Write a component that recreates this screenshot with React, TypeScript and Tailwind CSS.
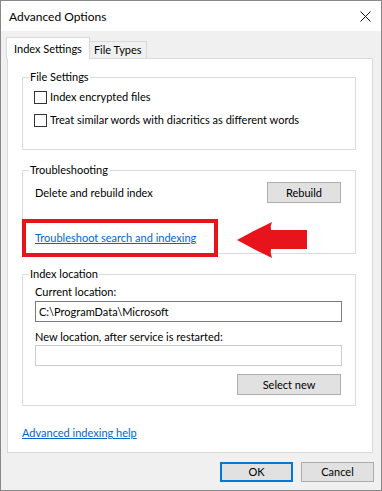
import React from "react";

function Checkbox({ label }: { label: string }) {
  return (
    <div className="flex items-center h-[16px]">
      <span className="w-[13px] h-[13px] border border-[#333333] bg-white mr-[3px]" />
      <span>{label}</span>
    </div>
  );
}

function Group({ title, children, className }: { title: string; children: React.ReactNode; className?: string }) {
  return (
    <fieldset className={"border border-[#dcdcdc] ml-[14px] mr-[16px] " + (className ?? "")}>
      <legend className="ml-[6px] px-[1px] leading-[16px]">{title}</legend>
      {children}
    </fieldset>
  );
}

function WinButton({ label, primary, className }: { label: string; primary?: boolean; className?: string }) {
  return (
    <div
      className={
        "flex items-center justify-center bg-[#e1e1e1] " +
        (primary ? "border-2 border-[#0078d7] " : "border border-[#adadad] ") +
        (className ?? "")
      }
    >
      {label}
    </div>
  );
}

export default function App() {
  return (
    <div className="w-[382px] h-[491px] flex flex-col bg-[#f0f0f0] border border-[#888888] text-[11px] leading-[16px] text-black font-['Lato',sans-serif] overflow-hidden">
      {/* title bar */}
      <div className="h-[30px] shrink-0 bg-white flex items-center justify-between pl-[8px] pr-[10px]">
        <span className="text-[12px] pt-[1px]">Advanced Options</span>
        <svg width="11" height="11" viewBox="0 0 11 11">
          <path d="M0.5 0.5 L10.5 10.5 M10.5 0.5 L0.5 10.5" stroke="#111" strokeWidth="1" fill="none" />
        </svg>
      </div>

      {/* tabs */}
      <div className="flex items-end pl-[5px] pt-[6px] h-[27px] shrink-0">
        <div className="px-[7px] bg-white border border-b-0 border-[#d9d9d9] flex items-center relative z-10 mb-[-1px] h-[22px]">
          Index Settings
        </div>
        <div className="h-[17px] px-[4px] bg-[#f0f0f0] border border-l-0 border-b-0 border-[#d9d9d9] flex items-center">
          File Types
        </div>
      </div>

      {/* tab panel */}
      <div className="relative mx-[6px] w-[366px] h-[395px] bg-white border border-[#d9d9d9] pt-[10px]">
        <Group title="File Settings" className="pb-[21px]">
          <div className="flex flex-col gap-[7px] pl-[11px] pt-[4px]">
            <Checkbox label="Index encrypted files" />
            <Checkbox label="Treat similar words with diacritics as different words" />
          </div>
        </Group>

        <Group title="Troubleshooting" className="mt-[12px] pb-[7px]">
          <div className="flex items-center justify-between pl-[12px] pr-[14px] pt-[4px]">
            <span>Delete and rebuild index</span>
            <WinButton label="Rebuild" className="w-[74px] h-[21px]" />
          </div>
          <div className="pl-[12px] mt-[27px]">
            <span className="text-[#0066cc] underline">Troubleshoot search and indexing</span>
          </div>
        </Group>

        <Group title="Index location" className="mt-[12px] pb-[10px]">
          <div className="flex flex-col pl-[12px] pr-[13px] pt-[2px]">
            <span>Current location:</span>
            <div className="mt-[1px] h-[21px] border border-[#7a7a7a] flex items-center pl-[3px]">
              C:\ProgramData\Microsoft
            </div>
            <span className="mt-[7px]">New location, after service is restarted:</span>
            <div className="h-[21px] border border-[#cccccc]" />
            <div className="flex justify-end mt-[8px]">
              <WinButton label="Select new" className="w-[104px] h-[21px] mr-[1px]" />
            </div>
          </div>
        </Group>

        <div className="pl-[14px] mt-[19px]">
          <span className="text-[#0066cc] underline">Advanced indexing help</span>
        </div>

        {/* annotation overlay */}
        <div className="absolute left-[14px] top-[160px] w-[196px] h-[38px] border-[4px] border-[#e8141c]" />
        <svg className="absolute left-[229px] top-[163px]" width="70" height="36" viewBox="0 0 70 36">
          <path d="M0 18 Q18 8 35 0 Q33 4 34 8 L70 8 L70 27 L34 27 Q33 31 35 36 Q18 28 0 18 Z" fill="#e8141c" />
        </svg>
      </div>

      {/* bottom buttons */}
      <div className="flex justify-end gap-[8px] pr-[7px] mt-[9px]">
        <WinButton label="OK" primary className="w-[73px] h-[20px]" />
        <WinButton label="Cancel" className="w-[73px] h-[20px]" />
      </div>
    </div>
  );
}
